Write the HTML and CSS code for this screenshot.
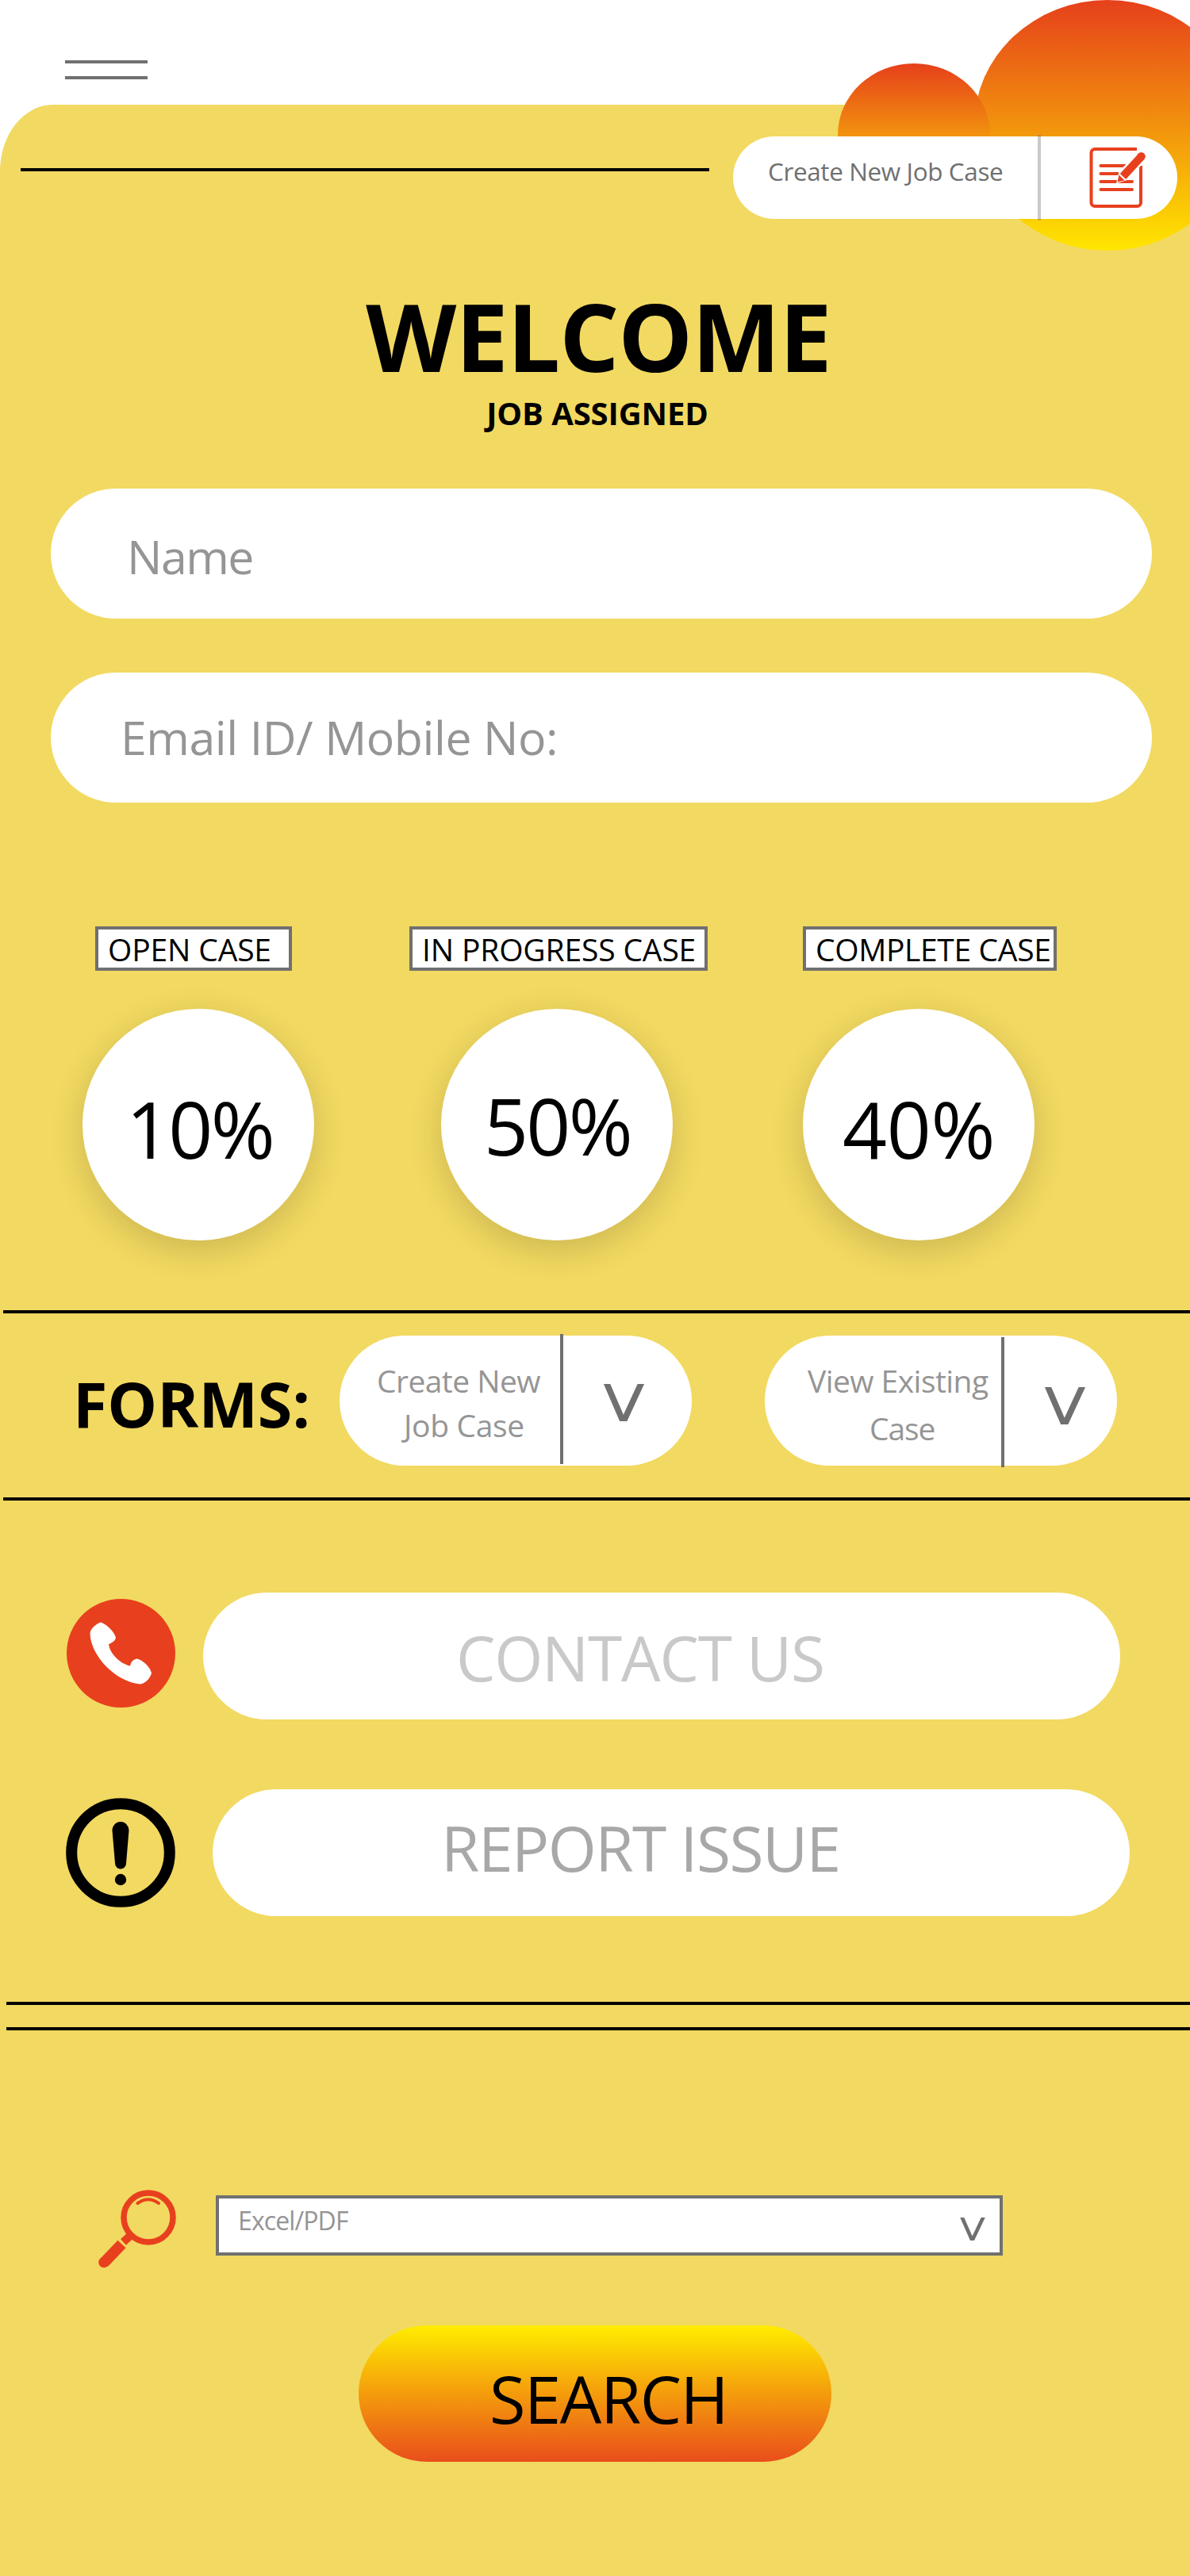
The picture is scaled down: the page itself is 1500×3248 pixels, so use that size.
FILE: index.html
```html
<!DOCTYPE html>
<html lang="en">
<head>
  <meta charset="utf-8">
  <title>Job Assigned</title>
  <link rel="stylesheet" href="styles.css">
</head>
<body>
  <header class="topbar">
    <div class="menu"><span class="menu-bar"></span><span class="menu-bar"></span></div>
  </header>
  <div class="bubble bubble-large"></div>
  <div class="bubble bubble-small"></div>

  <main class="panel">
    <div class="lead">
      <div class="lead-line"></div>
      <a class="new-case">
        <span class="new-case-text">Create New Job Case</span>
        <span class="new-case-divider"></span>
        <svg class="doc-icon" width="74" height="80" viewBox="0 0 74 80" fill="none">
          <path d="M62 4H9a4.500 4.500 0 0 0-4.500 4.500v63A4.500 4.500 0 0 0 9 76h53.500a4.500 4.500 0 0 0 4.500-4.500V25" stroke="#e8401e" stroke-width="4"/>
          <path d="M16.500 25H50M16.500 35H42M16.500 45H56M16.500 55H56" stroke="#e8401e" stroke-width="4" stroke-linecap="round"/>
          <path d="M36 47.500 39.500 32 64 7.500a7 7 0 0 1 10 10L50 43z" fill="#fff"/>
          <path d="M44.500 38.500 67.500 13.500" stroke="#e8401e" stroke-width="10"/>
          <circle cx="67.500" cy="13.200" r="5.300" fill="#e8401e"/>
          <path d="M37.500 45.500 39.500 36.500 46.500 43.500z" fill="#e8401e"/>
        </svg>
      </a>
    </div>

    <h1 class="title">WELCOME</h1>
    <h2 class="subtitle">JOB ASSIGNED</h2>

    <div class="fields">
      <div class="field field-name">Name</div>
      <div class="field field-contact">Email ID/ Mobile No:</div>
    </div>

    <section class="stats">
      <div class="stat stat-open">
        <div class="stat-label">OPEN CASE</div>
        <div class="stat-circle">10%</div>
      </div>
      <div class="stat stat-progress">
        <div class="stat-label">IN PROGRESS CASE</div>
        <div class="stat-circle">50%</div>
      </div>
      <div class="stat stat-complete">
        <div class="stat-label">COMPLETE CASE</div>
        <div class="stat-circle">40%</div>
      </div>
    </section>

    <section class="forms">
      <h3 class="forms-title">FORMS:</h3>
      <div class="select select-create">
        <div class="select-text"><span>Create New</span><span>Job Case</span></div>
        <div class="select-divider"></div>
        <svg class="select-arrow" width="53" height="47" viewBox="0 0 53 47"><path d="M4.200-1 25.700 49M48.800-1 25.700 49" transform="translate(0 -1)" fill="none" stroke="#707070" stroke-width="7.600"/></svg>
      </div>
      <div class="select select-view">
        <div class="select-text"><span>View Existing</span><span>Case</span></div>
        <div class="select-divider"></div>
        <svg class="select-arrow" width="53" height="47" viewBox="0 0 53 47"><path d="M4.200-1 25.700 49M48.800-1 25.700 49" transform="translate(0 -1)" fill="none" stroke="#707070" stroke-width="7.600"/></svg>
      </div>
    </section>

    <section class="actions">
      <div class="action action-contact">
        <svg class="action-icon" width="137" height="137" viewBox="0 0 137 137">
          <circle cx="68.500" cy="68.500" r="68.500" fill="#e8401e"/>
          <path d="M43 29.500C36 32 29.500 38 29.500 44.500C31 72 61 104 92.500 107.500C99 107 105.500 100 107 93.500C105.500 86 96 77 89 75.500C84 76 81 79.500 80 84.500C68 82 54.500 69.500 53 57C57 55.500 61 53 62 49C60.500 42 50.500 31.500 43 29.500z" fill="#fff"/>
        </svg>
        <div class="action-pill">CONTACT US</div>
      </div>
      <div class="action action-report">
        <svg class="action-icon" width="138" height="138" viewBox="0 0 138 138">
          <circle cx="69" cy="69" r="61.800" fill="none" stroke="#000" stroke-width="14"/>
          <path d="M58.500 41a10.500 11 0 0 1 21 0L76 82.500a7 7 0 0 1-14 0z"/>
          <circle cx="69" cy="103" r="7.200"/>
        </svg>
        <div class="action-pill">REPORT ISSUE</div>
      </div>
    </section>

    <div class="double-rule"></div>

    <section class="search">
      <svg class="search-icon" width="100" height="100" viewBox="0 0 100 100" fill="none" stroke="#e8401e">
        <circle cx="64" cy="35" r="31" stroke-width="7.500"/>
        <path d="M50.500 17Q64 7.500 77 17" stroke-width="4" stroke-linecap="round"/>
        <path d="M41 58 32.500 66" stroke-width="10"/>
        <path d="M30.500 68.500 8.500 91.500" stroke-width="14"/>
        <circle cx="8" cy="91.500" r="6.800" fill="#e8401e" stroke="none"/>
      </svg>
      <div class="search-select">
        <span class="search-text">Excel/PDF</span>
        <svg class="search-arrow" width="32" height="29" viewBox="0 0 32 29"><path d="M2.300-1 15.500 29M29.700-1 15.500 29" fill="none" stroke="#707070" stroke-width="4.600"/></svg>
      </div>
    </section>

    <div class="search-button">SEARCH</div>
  </main>
</body>
</html>
```
FILE: styles.css
```css
* { box-sizing: border-box; }

body {
  position: relative;
  width: 1500px;
  height: 3248px;
  margin: 0;
  overflow: hidden;
  display: flex;
  flex-direction: column;
  background: #fff;
  color: #000;
  font-family: "Open Sans", "Noto Sans", sans-serif;
}

h1, h2, h3 { margin: 0; font-weight: 700; }

svg { display: block; flex: none; }

/* Header */
.topbar { height: 132px; padding: 76px 0 0 82px; flex: none; }
.menu { display: flex; flex-direction: column; gap: 16px; width: 104px; }
.menu-bar { height: 4px; background: #707070; }

.bubble {
  position: absolute;
  border-radius: 50%;
  background: linear-gradient(#e6401b, #f39a0c 55%, #ffe600);
}
.bubble-large { left: 1228px; top: 0; width: 336px; height: 316px; }
.bubble-small { left: 1056px; top: 80px; width: 192px; height: 180px; }

/* Main panel */
.panel {
  flex: 1;
  padding-top: 40px;
  background: #f2d961;
  border-radius: 67px 0 0 0 / 84px 0 0 0;
}

.lead {
  position: relative;
  z-index: 1;
  display: flex;
  justify-content: space-between;
  padding: 0 16px 0 26px;
}
.lead-line { width: 868px; height: 4px; margin-top: 40px; background: #000; }

.new-case {
  display: flex;
  width: 560px;
  height: 104px;
  border-radius: 52px;
  background: #fff;
}
.new-case-text {
  width: 384px;
  padding: 24px 0 0 44px;
  font-size: 31.500px;
  line-height: 40px;
  letter-spacing: -.4px;
  color: #707070;
  white-space: nowrap;
}
.new-case-divider { width: 4px; height: 108px; margin-top: -2px; background: rgba(112, 112, 112, .37); }
.doc-icon { margin: 12px 0 0 59px; }

.title {
  margin-top: 88px;
  padding-left: 9px;
  font-size: 118px;
  line-height: 120px;
  letter-spacing: -1px;
  text-align: center;
}
.subtitle {
  margin-top: 12px;
  padding-left: 6px;
  font-size: 40px;
  line-height: 50px;
  letter-spacing: -.1px;
  text-align: center;
}

/* Text fields */
.fields { display: flex; flex-direction: column; gap: 68px; margin: 70px 48px 0 64px; }
.field {
  height: 164px;
  border-radius: 82px;
  background: #fff;
  font-size: 59px;
  line-height: 60px;
  color: #959595;
}
.field-name { padding: 55px 0 0 96px; letter-spacing: -1.500px; }
.field-contact { padding: 51px 0 0 88px; letter-spacing: -.440px; }

/* Case statistics */
.stats { display: flex; gap: 120px; margin-top: 156px; padding-left: 104px; }
.stat-label {
  height: 56px;
  padding-left: 12px;
  border: 4px solid #707070;
  background: #fff;
  font-size: 39px;
  line-height: 49px;
  letter-spacing: -.15px;
  white-space: nowrap;
}
.stat-circle {
  width: 292px;
  height: 292px;
  margin-top: 48px;
  padding: 102px 0 0 55px;
  border-radius: 50%;
  background: #fff;
  box-shadow: 0 12px 44px rgba(0, 0, 0, .16);
  font-size: 98px;
  line-height: 98px;
  letter-spacing: -2.700px;
}
.stat-open { width: 292px; }
.stat-open .stat-label { width: 248px; margin-left: 16px; }
.stat-progress { width: 376px; }
.stat-progress .stat-circle { margin-left: 40px; padding: 98px 0 0 54px; }
.stat-complete { width: 320px; }
.stat-complete .stat-label { letter-spacing: -.35px; }
.stat-complete .stat-circle { padding-left: 50px; letter-spacing: -.3px; }

/* Forms strip */
.forms {
  display: flex;
  height: 240px;
  margin: 88px 0 0 4px;
  border: solid #000;
  border-width: 4px 0;
}
.forms-title {
  width: 424px;
  padding: 74px 0 0 88px;
  font-size: 79px;
  line-height: 80px;
}
.select {
  display: flex;
  width: 444px;
  height: 164px;
  margin-top: 28px;
  border-radius: 82px;
  background: #fff;
}
.select-view { margin-left: 92px; }
.select-text {
  display: flex;
  flex-direction: column;
  font-size: 39px;
  letter-spacing: -.55px;
  color: #959595;
  white-space: nowrap;
}
.select-create .select-text { width: 278px; padding: 29px 0 0 47px; line-height: 56px; }
.select-create .select-text span + span { padding-left: 34px; letter-spacing: -.35px; }
.select-view .select-text { width: 298px; padding: 27px 0 0 54px; line-height: 60px; }
.select-view .select-text span + span { padding-left: 78px; letter-spacing: -1.100px; }
.select-divider { width: 4px; height: 164px; background: #707070; }
.select-create .select-divider { margin-top: -2px; }
.select-view .select-divider { margin-top: 2px; }
.select-arrow { margin: 61px 0 0 50px; }
.select-view .select-arrow { margin-top: 65px; }

/* Contact and report */
.actions { display: flex; flex-direction: column; gap: 88px; margin-top: 116px; }
.action { display: flex; height: 160px; }
.action-pill {
  width: 1156px;
  border-radius: 80px;
  background: #fff;
  font-size: 78.500px;
  line-height: 80px;
}
.action-contact { padding-left: 84px; gap: 35px; }
.action-contact .action-icon { margin-top: 8px; }
.action-contact .action-pill { padding: 42px 0 0 319px; letter-spacing: -1.200px; color: #c9c9c9; }
.action-report { padding-left: 83px; gap: 47px; }
.action-report .action-icon { margin-top: 11px; }
.action-report .action-pill { padding: 34px 0 0 288px; letter-spacing: -1.550px; color: #a8a8a8; }

.double-rule {
  height: 36px;
  margin: 108px 0 0 8px;
  border: solid #000;
  border-width: 4px 0;
}

/* Search */
.search { display: flex; gap: 49px; height: 76px; margin-top: 208px; padding-left: 123px; }
.search-icon { margin-top: -7px; }
.search-select {
  display: flex;
  justify-content: space-between;
  width: 992px;
  height: 76px;
  padding: 0 18px 0 24px;
  border: 4px solid #707070;
  background: #fff;
}
.search-text { padding-top: 12px; font-size: 32px; line-height: 32px; letter-spacing: -.9px; color: #959595; }
.search-arrow { margin-top: 24px; }

.search-button {
  width: 596px;
  height: 172px;
  margin: 88px 0 0 452px;
  padding: 50px 0 0 165px;
  border-radius: 86px;
  background: linear-gradient(#ffed00, #f49c0c 50%, #e94e1b);
  font-size: 83px;
  line-height: 84px;
  letter-spacing: -1.400px;
}
```
